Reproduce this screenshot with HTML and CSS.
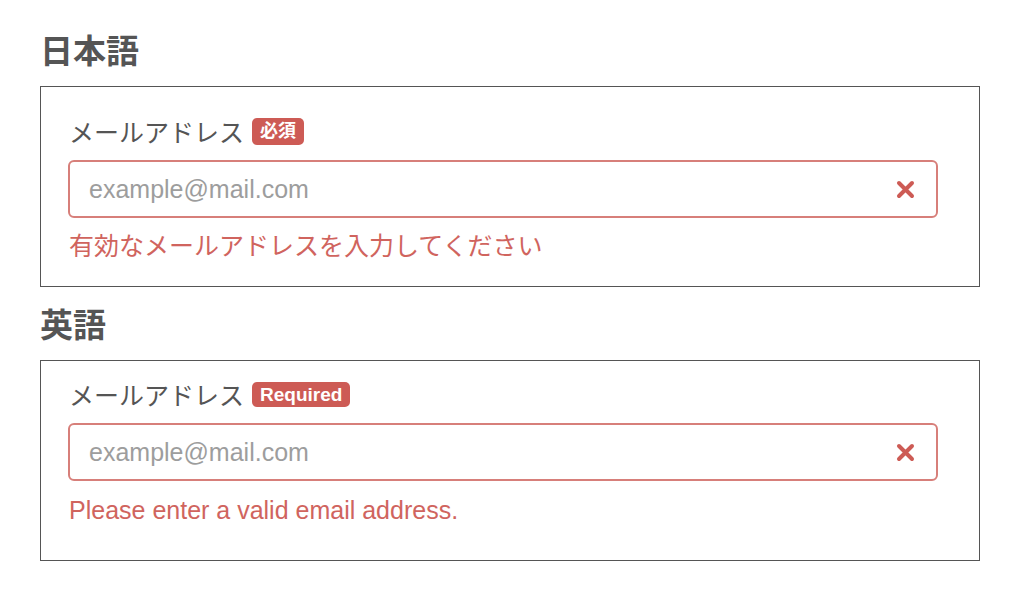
FILE: index.html
```html
<!DOCTYPE html>
<html lang="ja">
<head>
    <meta charset="UTF-8">
    <meta name="viewport" content="width=device-width, initial-scale=1.0">
    <title>メールアドレス入力</title>
    <link rel="stylesheet" href="styles.css">
</head>
<body>
    <h2 class="lang-title">日本語</h2>
    <div class="field-box field-box-ja">
        <div class="field-label">
            <span>メールアドレス</span>
            <span class="badge badge-ja">必須</span>
        </div>
        <div class="input-wrap">
            <input type="email" class="input" placeholder="example@mail.com">
            <svg class="clear-icon" width="19" height="19" viewBox="0 0 19 19">
                <path d="M3 3 L16 16 M16 3 L3 16" />
            </svg>
        </div>
        <div class="error">有効なメールアドレスを入力してください</div>
    </div>

    <h2 class="lang-title lang-title-next">英語</h2>
    <div class="field-box field-box-en">
        <div class="field-label">
            <span>メールアドレス</span>
            <span class="badge">Required</span>
        </div>
        <div class="input-wrap">
            <input type="email" class="input" placeholder="example@mail.com">
            <svg class="clear-icon" width="19" height="19" viewBox="0 0 19 19">
                <path d="M3 3 L16 16 M16 3 L3 16" />
            </svg>
        </div>
        <div class="error">Please enter a valid email address.</div>
    </div>
</body>
</html>
```

FILE: styles.css
```css
body {
    margin: 0;
    padding: 29px 44px 0 40px;
    font-family: "Liberation Sans", "Noto Sans CJK JP", sans-serif;
    background-color: #fff;
    color: #555;
}
.lang-title {
    margin: 0 0 17px 0;
    font-family: "Noto Sans CJK JP", sans-serif;
    font-size: 33px;
    font-weight: bold;
    line-height: 40px;
    color: #555;
}
.lang-title-next {
    margin-top: 16px;
}
.field-box {
    border: 1px solid #555;
    padding: 0 41px 0 27px;
}
.field-box-ja {
    padding-top: 29px;
    padding-bottom: 25px;
}
.field-box-en {
    padding-top: 18px;
    padding-bottom: 35px;
}
.field-label {
    display: flex;
    align-items: center;
    gap: 8px;
    height: 30px;
    font-family: "Noto Sans CJK JP", sans-serif;
    font-size: 25px;
    color: #555;
    padding-left: 1px;
}
.badge {
    display: inline-block;
    padding: 2px 8px;
    border-radius: 5px;
    background-color: #cd5b55;
    color: #fff;
    font-family: "Liberation Sans", "Noto Sans CJK JP", sans-serif;
    font-size: 19px;
    font-weight: bold;
    line-height: 21px;
}
.badge-ja {
    padding: 3px 8px;
    font-size: 18px;
}
.input-wrap {
    display: flex;
    align-items: center;
    height: 58px;
    box-sizing: border-box;
    margin-top: 14px;
    padding: 0 21px 0 19px;
    border: 2px solid #d77f7a;
    border-radius: 6px;
}
.input {
    flex: 1;
    border: none;
    outline: none;
    padding: 0;
    background: transparent;
    font-family: "Liberation Sans", sans-serif;
    font-size: 25px;
    color: #333;
}
.input::placeholder {
    color: #9d9d9d;
}
.clear-icon path {
    fill: none;
    stroke: #cd5b55;
    stroke-width: 4;
    stroke-linecap: round;
}
.error {
    margin-top: 13px;
    height: 30px;
    line-height: 30px;
    font-size: 25px;
    color: #d0645e;
    padding-left: 1px;
}
.field-box-en .error {
    margin-top: 14px;
}
```
